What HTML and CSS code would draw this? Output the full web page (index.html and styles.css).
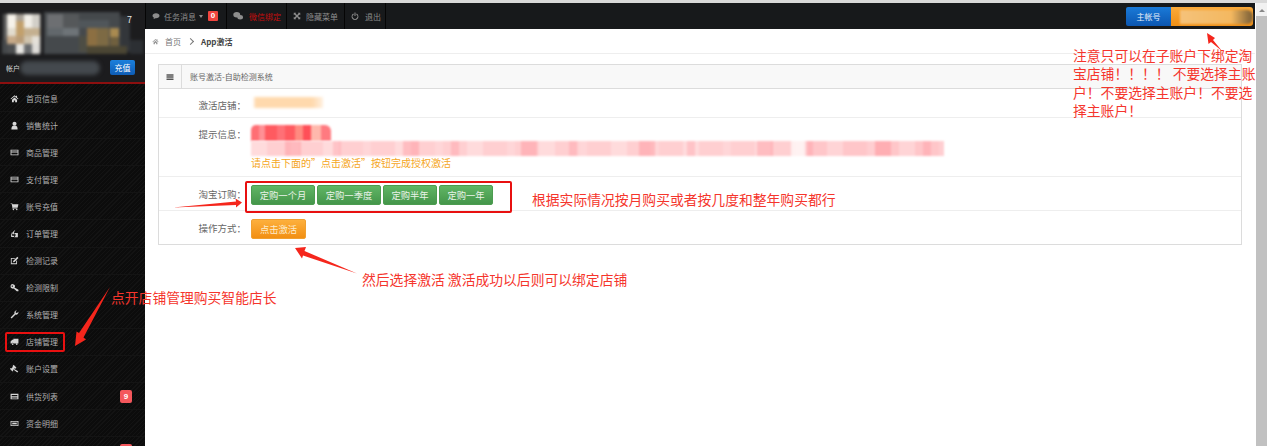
FILE: index.html
```html
<!DOCTYPE html>
<html lang="zh-CN">
<head>
<meta charset="utf-8">
<title>App激活</title>
<link rel="stylesheet" href="styles.css">
</head>
<body>
<svg class="defs" width="0" height="0">
  <symbol id="i-home" viewBox="0 0 16 16"><path d="M8 2 1 8.500l1 1L8 4.500l6 5 1-1-2.500-2.300V3h-2v1.400zM3.500 10v4.500h3.300v-3h2.400v3h3.300V10L8 6z"/></symbol>
  <symbol id="i-user" viewBox="0 0 16 16"><circle cx="8" cy="5" r="3.600"/><path d="M2.500 15c0-4.500 1.500-6.500 3-6.500h5c1.500 0 3 2 3 6.500z"/></symbol>
  <symbol id="i-card" viewBox="0 0 16 16"><path d="M1 3h14v10H1zm1.500 1.500V6h11V4.500zm0 3.500v3.500h11V8z" fill-rule="evenodd"/></symbol>
  <symbol id="i-cart" viewBox="0 0 16 16"><path d="M1 2.500h3l.6 1.500H15l-1.500 6H5.500l.3 1H13v1.200H4.700L3 3.700H1z"/><circle cx="6" cy="13.500" r="1.300"/><circle cx="12" cy="13.500" r="1.300"/></symbol>
  <symbol id="i-copy" viewBox="0 0 16 16"><path d="M9 1.500 4 6.500v3h3V6.500zM2 5.500v8.500h7V12H4zM8 7h6v7.500H7.500V12H10V9.500H8z" fill-rule="evenodd"/></symbol>
  <symbol id="i-edit" viewBox="0 0 16 16"><path d="M1.500 3.500h8L8 5H3v8h8V9l1.500-1.500v7h-11zM13 1.500l2 2-7 7-2.800.8.800-2.800z"/></symbol>
  <symbol id="i-key" viewBox="0 0 16 16"><path d="M5 2a4 4 0 1 1-1 7.900A4 4 0 0 1 5 2zM4 4.500a1.200 1.200 0 1 0 .1 0zM8 8l7 4v2.500h-3L7 10z" fill-rule="evenodd"/></symbol>
  <symbol id="i-wrench" viewBox="0 0 16 16"><path d="M11.500 1a3.800 3.800 0 0 0-3.500 5.200L1.500 12.700a1.300 1.300 0 0 0 1.800 1.800L9.800 8a3.800 3.800 0 0 0 5-4.700l-2.300 2.200-2-.6-.6-2L12.200 1z"/></symbol>
  <symbol id="i-truck" viewBox="0 0 16 16"><path d="M6 3h9v8.500H6.500a1.800 1.800 0 0 0-3.500 0H1V8l3-3h2z"/><circle cx="4.800" cy="12.500" r="1.500"/><circle cx="12" cy="12.500" r="1.500"/></symbol>
  <symbol id="i-gavel" viewBox="0 0 16 16"><path d="M6.500 1.500 11.500 6.500 9.500 8.500 8.500 7.500 7.300 8.700 14.500 13 13 15 6 9.800 5 10.800 6 11.800 4.500 13.300-.2 8.500 1.300 7 2.300 8l3-3-1-1z"/></symbol>
  <symbol id="i-list" viewBox="0 0 16 16"><path d="M1 3h14v10H1zm2 2.500V7h10V5.500zM3 8.300v1.400h10V8.300zm0 2.200v1h10v-1z" fill-rule="evenodd"/></symbol>
  <symbol id="i-money" viewBox="0 0 16 16"><path d="M1 3.500h14v9H1zm1.500 1.500v6h11V5z" fill-rule="evenodd"/><rect x="4" y="6.500" width="8" height="3"/></symbol>
  <symbol id="i-comment" viewBox="0 0 16 16"><path d="M8 2.500c4 0 7 2.200 7 5s-3 5-7 5l-1.200-.1C5.500 13.500 4 14 2.500 14c.8-.8 1.300-1.600 1.400-2.500C2.100 10.500 1 9.100 1 7.500c0-2.800 3-5 7-5z"/></symbol>
  <symbol id="i-wechat" viewBox="0 0 16 16"><ellipse cx="6" cy="6" rx="5.500" ry="4.300"/><ellipse cx="11.500" cy="10" rx="4.500" ry="3.500"/></symbol>
  <symbol id="i-arrows" viewBox="0 0 16 16"><path d="M1.500 1.500h5L5 3l3 3 3-3-1.500-1.500h5v5L13 5l-3 3 3 3 1.500-1.500v5h-5L11 13l-3-3-3 3 1.500 1.500h-5v-5L3 11l3-3-3-3-1.500 1.500z"/></symbol>
  <symbol id="i-power" viewBox="0 0 16 16"><path d="M7 1h2v7H7z"/><path d="M4.500 3.200 5.600 4.900a4.800 4.800 0 1 0 4.800 0l1.100-1.700a6.800 6.800 0 1 1-7 0z"/></symbol>
  <symbol id="i-bars" viewBox="0 0 16 16"><path d="M1 2.500h14v3H1zM1 6.700h14v3H1zM1 10.900h14v3H1z"/></symbol>
</svg>

<div class="strip"></div>
<div class="shell">
  <aside class="sidebar">
    <header class="profile">
      <div class="profile-top">
        <svg class="avatar" width="145" height="50" viewBox="0 0 145 50">
          <rect x="3" y="4" width="38" height="38" fill="#5a5a5a"/>
          <rect x="44" y="2" width="76" height="42" fill="#45494c"/>
          <rect x="120" y="6" width="10" height="36" fill="#33363a"/>
          <rect x="2" y="30" width="10" height="14" fill="#44474a"/>
          <rect x="130" y="30" width="13" height="14" fill="#2c2f33"/>
          <rect x="7" y="4" width="9" height="14" fill="#f6f2ea"/>
          <rect x="16" y="4" width="8" height="7" fill="#a9a298"/>
          <rect x="16" y="11" width="8" height="15" fill="#c2a06c"/>
          <rect x="24" y="4" width="8" height="14" fill="#f2efe8"/>
          <rect x="32" y="4" width="8" height="14" fill="#d2cfc8"/>
          <rect x="7" y="18" width="9" height="8" fill="#e2dccf"/>
          <rect x="24" y="18" width="16" height="8" fill="#c4b090"/>
          <rect x="7" y="26" width="9" height="8" fill="#c6a988"/>
          <rect x="16" y="26" width="8" height="8" fill="#b89c78"/>
          <rect x="24" y="26" width="8" height="8" fill="#cfc3ad"/>
          <rect x="32" y="26" width="8" height="8" fill="#e4e0d8"/>
          <rect x="7" y="34" width="9" height="10" fill="#4c4e50"/>
          <rect x="16" y="34" width="8" height="10" fill="#e8e6e2"/>
          <rect x="24" y="34" width="8" height="10" fill="#6a6c6e"/>
          <rect x="32" y="34" width="8" height="10" fill="#dedcd8"/>
          <rect x="47" y="4" width="16" height="14" fill="#6d6f72"/>
          <rect x="63" y="4" width="16" height="14" fill="#55585a"/>
          <rect x="47" y="18" width="16" height="8" fill="#62686c"/>
          <rect x="63" y="18" width="16" height="8" fill="#6e7478"/>
          <rect x="79" y="10" width="30" height="8" fill="#50565a"/>
          <rect x="87" y="18" width="10" height="18" fill="#8c6f42"/>
          <rect x="97" y="18" width="12" height="18" fill="#7d6a44"/>
          <rect x="110" y="18" width="9" height="9" fill="#a98a50"/>
          <rect x="110" y="27" width="9" height="9" fill="#70603e"/>
          <rect x="79" y="26" width="8" height="16" fill="#4d4d44"/>
          <rect x="87" y="36" width="40" height="8" fill="#4b4634"/>
        </svg>
        <span class="profile-seven">7</span>
      </div>
      <div class="profile-account">
        <span class="account-label">帐户</span>
        <span class="account-blur"></span>
        <span class="recharge">充值</span>
      </div>
    </header>
    <nav class="menu">
      <a class="menu-item"><svg class="ico"><use href="#i-home"/></svg>首页信息</a>
      <a class="menu-item"><svg class="ico"><use href="#i-user"/></svg>销售统计</a>
      <a class="menu-item"><svg class="ico"><use href="#i-card"/></svg>商品管理</a>
      <a class="menu-item"><svg class="ico"><use href="#i-card"/></svg>支付管理</a>
      <a class="menu-item"><svg class="ico"><use href="#i-cart"/></svg>账号充值</a>
      <a class="menu-item"><svg class="ico"><use href="#i-copy"/></svg>订单管理</a>
      <a class="menu-item"><svg class="ico"><use href="#i-edit"/></svg>检测记录</a>
      <a class="menu-item"><svg class="ico"><use href="#i-key"/></svg>检测限制</a>
      <a class="menu-item"><svg class="ico"><use href="#i-wrench"/></svg>系统管理</a>
      <a class="menu-item"><svg class="ico"><use href="#i-truck"/></svg>店铺管理</a>
      <a class="menu-item"><svg class="ico"><use href="#i-gavel"/></svg>账户设置</a>
      <a class="menu-item"><svg class="ico"><use href="#i-list"/></svg>供货列表<span class="menu-badge">9</span></a>
      <a class="menu-item"><svg class="ico"><use href="#i-money"/></svg>资金明细</a>
      <a class="menu-item"><span class="menu-badge"></span></a>
    </nav>
  </aside>

  <div class="main">
    <div class="topbar">
      <a class="tab tab-task"><svg class="ico-top"><use href="#i-comment"/></svg>任务消息<span class="caret"></span><span class="top-badge">0</span></a>
      <a class="tab tab-wechat"><svg class="ico-top ico-wechat"><use href="#i-wechat"/></svg><span class="danger">微信绑定</span></a>
      <a class="tab tab-hide"><svg class="ico-top"><use href="#i-arrows"/></svg>隐藏菜单</a>
      <a class="tab tab-exit"><svg class="ico-top"><use href="#i-power"/></svg>退出</a>
      <div class="account-switch">
        <span class="switch-main">主帐号</span>
        <span class="switch-sub"><span class="switch-blur"></span></span>
      </div>
    </div>
    <div class="crumbs">
      <svg class="ico-crumb"><use href="#i-home"/></svg>
      <span class="crumb-link">首页</span>
      <span class="crumb-sep"></span>
      <strong class="crumb-now">App激活</strong>
    </div>
    <section class="panel">
      <div class="panel-head">
        <span class="panel-icon"><svg class="ico-bars"><use href="#i-bars"/></svg></span>
        <span class="panel-title">账号激活-自助检测系统</span>
      </div>
      <div class="row row-store">
        <span class="row-label">激活店铺：</span>
        <div class="row-body"><span class="blur-store"></span></div>
      </div>
      <div class="row row-hint">
        <span class="row-label">提示信息：</span>
        <div class="row-body hint-body">
          <span class="blur-red"></span>
          <span class="blur-pink"></span>
          <span class="hint-text">请点击下面的”点击激活”按钮完成授权激活</span>
        </div>
      </div>
      <div class="row row-order">
        <span class="row-label">淘宝订购：</span>
        <div class="row-body btns">
          <a class="btn btn-green btn-month">定购一个月</a>
          <a class="btn btn-green btn-month">定购一季度</a>
          <a class="btn btn-green btn-half">定购半年</a>
          <a class="btn btn-green btn-half">定购一年</a>
        </div>
      </div>
      <div class="row row-action">
        <span class="row-label">操作方式：</span>
        <div class="row-body"><a class="btn btn-orange">点击激活</a></div>
      </div>
    </section>
  </div>

  <div class="scrollbar"><span class="scroll-up"></span><span class="scroll-thumb"></span></div>
</div>

<div class="overlay">
  <span class="mark mark-shop"></span>
  <span class="mark mark-btns"></span>
  <svg class="arrows" width="1267" height="446" viewBox="0 0 1267 446">
    <path d="M1207 33 1215 38 1213 40 1222 51 1211 42 1208.500 44z"/>
    <path d="M173 207.500 236 201.500 235.500 198.500 242 202.500 236 207.500 236 205z"/>
    <path d="M295 248 306 247 304.500 251 357 273.500 303 255.500 302 258.500z"/>
    <path d="M110 287 79 333 76.500 331.500 75 346 86 339.500 83.500 337.500z"/>
  </svg>
  <p class="note note-top">注意只可以在子账户下绑定淘宝店铺！！！！ 不要选择主账户！不要选择主账户！不要选择主账户！</p>
  <p class="note note-order">根据实际情况按月购买或者按几度和整年购买都行</p>
  <p class="note note-active">然后选择激活 激活成功以后则可以绑定店铺</p>
  <p class="note note-shop">点开店铺管理购买智能店长</p>
</div>
</body>
</html>
```

FILE: styles.css
```css
* { box-sizing: border-box; }
html, body { margin: 0; height: 100%; overflow: hidden; }
body {
  background: #fff;
  color: #555;
  font-family: "Noto Sans CJK SC", "Liberation Sans", sans-serif;
  font-size: 9px;
  display: flex;
  flex-direction: column;
}
a { color: inherit; text-decoration: none; }
.defs { position: absolute; }

.strip { height: 3px; background: #d9d9d9; flex: none; }
.shell { flex: 1; display: flex; min-height: 0; }

/* sidebar */
.sidebar {
  width: 145px;
  flex: none;
  background-color: #0e0e0e;
  background-image: repeating-linear-gradient(135deg, #131313 0 1px, #0c0c0c 1px 3px);
  color: #b5b5b5;
  overflow: hidden;
}
.profile {
  height: 81px;
  background: #1c1c1e;
  border-bottom: 2px solid #8c0f0f;
  position: relative;
}
.profile-top { height: 52px; padding-top: 7px; display: flex; }
.avatar { filter: blur(1.500px); flex: none; }
.profile-seven { position: absolute; left: 127px; top: 10px; color: #e8e8e8; font-size: 9px; }
.profile-account { display: flex; align-items: center; padding: 3px 10px 0 6px; height: 22px; }
.account-label { color: #ddd; font-size: 7px; width: 14px; white-space: nowrap; flex: none; }
.account-blur { width: 80px; height: 14px; background: #44494e; border-radius: 7px; filter: blur(2px); }
.recharge {
  margin-left: auto;
  width: 25px;
  height: 15px;
  line-height: 15px;
  text-align: center;
  color: #fff;
  font-size: 8px;
  border-radius: 2px;
  background: linear-gradient(#1b80dc, #0e5cb5);
}
.menu { display: flex; flex-direction: column; padding-top: 1px; }
.menu-item {
  height: 27.100px;
  flex: none;
  display: flex;
  align-items: center;
  padding: 0 13px 0 10px;
  font-size: 8px;
  color: #b0b0b0;
  border-bottom: 1px solid #141414;
}
.ico { width: 9px; height: 9px; fill: #d6d6d6; margin-right: 7px; flex: none; }
.menu-badge {
  margin-left: auto;
  width: 12px;
  height: 13px;
  line-height: 13px;
  border-radius: 2px;
  background: #f4575c;
  color: #fff;
  font-weight: 700;
  text-align: center;
  font-size: 8px;
  font-family: "Liberation Sans", sans-serif;
}

/* main */
.main { flex: 1; min-width: 0; display: flex; flex-direction: column; background: #fff; }
.topbar {
  height: 26px;
  flex: none;
  background: #17191b;
  display: flex;
  align-items: stretch;
  color: #8d8d8d;
  font-size: 8px;
  white-space: nowrap;
}
.tab { display: flex; align-items: center; border-left: 1px solid #050505; padding-left: 6px; flex: none; }
.tab-task { width: 81px; }
.tab-wechat { width: 60px; }
.tab-hide { width: 58px; }
.tab-exit { width: 42px; border-right: 1px solid #050505; }
.ico-top { width: 8px; height: 8px; fill: #8d8d8d; margin-right: 4px; flex: none; }
.ico-wechat { width: 10px; height: 10px; margin-right: 6px; }
.tab-hide .ico-top { margin-right: 5px; }
.tab-exit .ico-top { margin-right: 6px; }
.danger { color: #c40d0d; }
.caret {
  width: 0; height: 0;
  margin: 0 5px 0 3px;
  border-left: 2.500px solid transparent;
  border-right: 2.500px solid transparent;
  border-top: 3px solid #8d8d8d;
}
.top-badge {
  width: 10px;
  height: 10px;
  line-height: 10px;
  background: #f1453f;
  color: #fff;
  text-align: center;
  border-radius: 1px;
  font-weight: 700;
  font-family: "Liberation Sans", sans-serif;
}
.account-switch {
  margin: 4px 2px 3px auto;
  display: flex;
  height: 19px;
}
.switch-main {
  width: 45px;
  background: linear-gradient(#1a7ad8, #0c56b0);
  color: #e8f0fa;
  font-size: 8px;
  line-height: 19px;
  text-align: center;
  border-radius: 2px 0 0 2px;
}
.switch-sub {
  width: 82px;
  background: linear-gradient(#fbaa3a, #ef8f16);
  border-radius: 0 3px 3px 0;
  padding: 3px 0 2px 9px;
  display: flex;
}
.switch-blur {
  width: 73px;
  background: linear-gradient(90deg, #f5c27a, #f4b860 70%, #8a6a3c 95%);
  filter: blur(1px);
  border-radius: 0 6px 6px 0;
}

.crumbs {
  height: 25px;
  flex: none;
  display: flex;
  align-items: center;
  padding-left: 7px;
  border-bottom: 1px solid #eee;
  font-size: 8px;
  color: #777;
}
.ico-crumb { width: 7px; height: 7px; fill: #999; margin-right: 6px; }
.crumb-sep {
  width: 5px; height: 5px;
  margin: 0 8px 0 7px;
  border-top: 1px solid #777;
  border-right: 1px solid #777;
  transform: rotate(45deg);
}
.crumb-now { color: #444; }

.panel {
  margin: 10px 13px 0 13px;
  border: 1px solid #dcdcdc;
  flex: none;
}
.panel-head {
  height: 24px;
  display: flex;
  align-items: stretch;
  background: #f8f8f8;
  border-bottom: 1px solid #dcdcdc;
}
.panel-icon {
  width: 23px;
  display: flex;
  align-items: center;
  justify-content: center;
  border-right: 1px solid #dcdcdc;
}
.ico-bars { width: 8px; height: 8px; fill: #555; }
.panel-title { padding-left: 8px; line-height: 23px; font-size: 8px; color: #666; }
.row { display: flex; border-bottom: 1px solid #eee; }
.row:last-child { border-bottom: 0; }
.row-label { width: 87px; text-align: right; flex: none; color: #666; line-height: 14px; font-size: 9.500px; white-space: nowrap; }
.row-body { padding-left: 5px; flex: 1; min-width: 0; }
.row-store { height: 29px; padding-top: 9px; }
.row-hint { height: 59px; padding-top: 9px; }
.row-order { height: 34px; padding-top: 10px; }
.row-action { height: 33px; padding-top: 10px; }
.hint-body { display: flex; flex-direction: column; align-items: flex-start; }
.blur-store {
  display: block;
  width: 72px;
  height: 11px;
  margin-top: -1px;
  filter: blur(1.500px);
  background: linear-gradient(90deg, #fff 0 3%, #ffd9ad 6% 85%, #fff0e0 100%);
}
.blur-red {
  display: block;
  width: 80px;
  height: 16px;
  margin-top: -2px;
  filter: blur(1px);
  border-radius: 5px 6px 0 0;
  background:
    linear-gradient(90deg, #ff6e74 0 8px, #ff9095 8px 14px, #ff5a60 14px 26px, #ff7076 26px 34px, #ff5a60 34px 44px, #ff8a80 44px 52px, #ff4f58 52px 60px, #ffb8ac 60px 70px, #ff7a80 70px 80px);
}
.blur-pink {
  display: block;
  width: 693px;
  height: 15px;
  filter: blur(.8px);
  background:
    repeating-linear-gradient(90deg, transparent 0 34px, rgba(255,120,130,.3) 34px 50px, transparent 50px 82px, rgba(255,140,150,.3) 82px 90px, transparent 90px 118px),
    repeating-linear-gradient(90deg, rgba(255,255,255,.25) 0 16px, transparent 16px 40px, rgba(255,255,255,.15) 40px 48px, transparent 48px 72px),
    linear-gradient(90deg, #ffcfd1 0 540px, #fff0f0 540px 556px, #ffc6c9 556px 693px);
}
.hint-text { color: #f5a623; font-size: 10px; line-height: 14px; white-space: nowrap; }
.btns { display: flex; gap: 2px; align-items: flex-start; margin-top: -2px; }
.btn {
  display: block;
  height: 20px;
  line-height: 19px;
  text-align: center;
  color: #e9f3e9;
  border-radius: 2px;
  font-size: 9.300px;
  white-space: nowrap;
}
.btn-green { background: linear-gradient(#61b565, #44964a); border: 1px solid #4c9c50; }
.btn-month { width: 64px; }
.btn-half { width: 54px; }
.btn-orange {
  width: 55px;
  margin-top: -2px;
  background: linear-gradient(#fdb03d, #f28f12);
  color: #fdeccc;
  border: 1px solid #f0a030;
}

/* scrollbar */
.scrollbar { width: 11px; flex: none; background: #f1f1f1; display: flex; flex-direction: column; margin-left: 1px; }
.scroll-up {
  width: 0; height: 0; flex: none;
  margin: 6px 0 4px 3px;
  border-left: 3px solid transparent;
  border-right: 3px solid transparent;
  border-bottom: 3px solid #888;
}
.scroll-thumb { flex: 1; background: #c1c1c1; }

/* annotations on top of the screenshot */
.overlay { position: absolute; inset: 0; pointer-events: none; }
.arrows { position: absolute; left: 0; top: 0; fill: #f5261c; }
.mark { position: absolute; border: 2px solid #e81010; border-radius: 2px; }
.mark-shop { left: 5px; top: 332px; width: 60px; height: 20px; }
.mark-btns { left: 245px; top: 181px; width: 267px; height: 32px; }
.note { position: absolute; margin: 0; color: #f5352c; font-size: 13.800px; line-height: 18.400px; }
.note-top { left: 1073px; top: 46px; width: 184px; }
.note-order { left: 532px; top: 190px; white-space: nowrap; }
.note-active { left: 362px; top: 270px; white-space: nowrap; }
.note-shop { left: 111px; top: 288px; white-space: nowrap; }
```
